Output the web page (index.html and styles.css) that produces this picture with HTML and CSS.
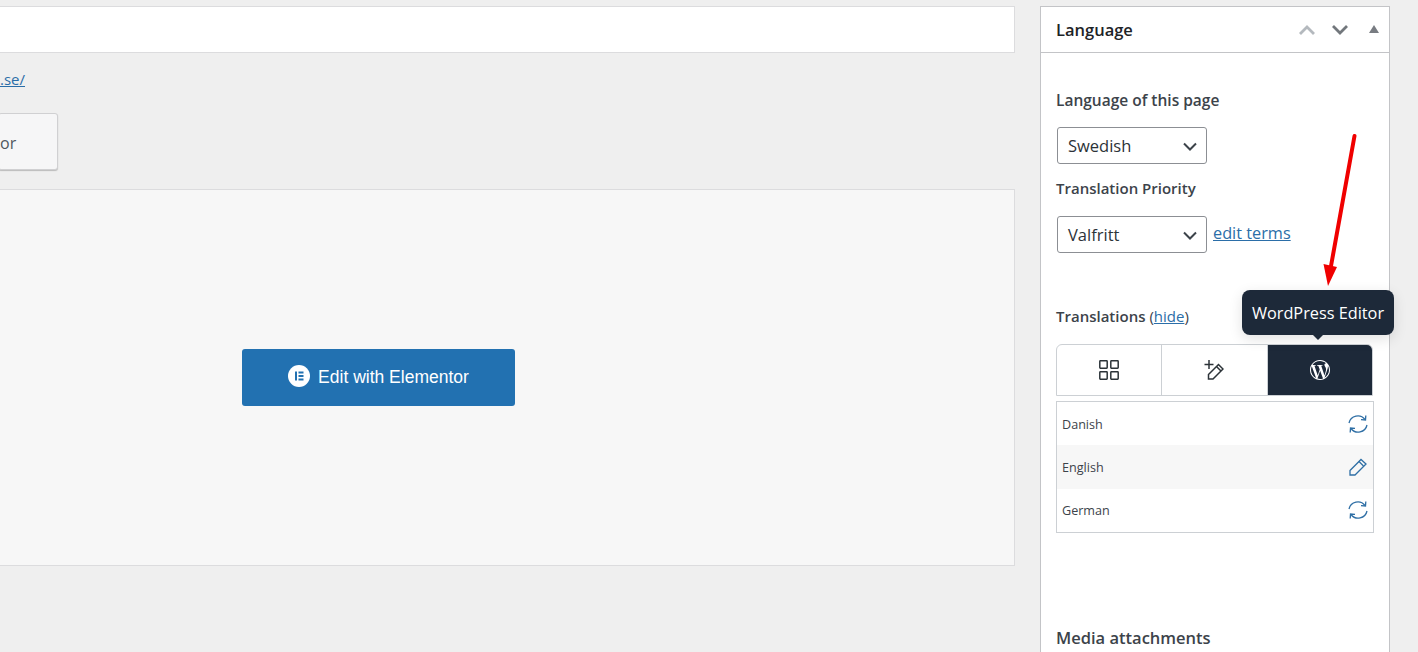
FILE: index.html
```html
<!DOCTYPE html>
<html lang="en">
<head>
    <meta charset="UTF-8">
    <meta name="viewport" content="width=device-width, initial-scale=1.0">
    <title>Edit Page</title>
    <link rel="stylesheet" href="styles.css">
</head>
<body>
    <div class="page">
        <!-- Main column -->
        <div class="main">
            <div class="title-input"></div>
            <div class="permalink"><a href="#">.se/</a></div>
            <div class="switch-btn">or</div>
            <div class="builder-box">
                <a class="elementor-btn" href="#">
                    <svg class="elementor-icon" viewBox="0 0 22 22">
                        <circle cx="11" cy="11" r="11" fill="#fff"/>
                        <rect x="7" y="6.5" width="2" height="9" fill="#2271b1"/>
                        <rect x="10.5" y="6.5" width="5" height="2" fill="#2271b1"/>
                        <rect x="10.5" y="10" width="5" height="2" fill="#2271b1"/>
                        <rect x="10.5" y="13.5" width="5" height="2" fill="#2271b1"/>
                    </svg>
                    Edit with Elementor
                </a>
            </div>
        </div>

        <!-- Language box -->
        <div class="side">
            <div class="box">
                <div class="box-head">
                    <h2>Language</h2>
                    <div class="box-controls">
                        <svg class="chev" viewBox="0 0 18 12"><path d="M2 10l7-7 7 7" stroke="#b4b9be"/></svg>
                        <svg class="chev" viewBox="0 0 18 12"><path d="M2 2l7 7 7-7" stroke="#72777c"/></svg>
                        <svg class="toggle" viewBox="0 0 10 8"><path d="M5 0l5 8H0z"/></svg>
                    </div>
                </div>
                <div class="box-body">
                    <div class="label first">Language of this page</div>
                    <div class="select">
                        Swedish
                        <svg class="select-arrow" viewBox="0 0 14 9"><path d="M1 1.5l6 6 6-6"/></svg>
                    </div>
                    <div class="label priority">Translation Priority</div>
                    <div class="priority-row">
                        <div class="select">
                            Valfritt
                            <svg class="select-arrow" viewBox="0 0 14 9"><path d="M1 1.5l6 6 6-6"/></svg>
                        </div>
                        <a class="edit-terms" href="#">edit terms</a>
                    </div>
                    <div class="label translations">Translations <span class="hide-wrap">(<a href="#">hide</a>)</span></div>
                    <div class="tabs">
                        <div class="tab">
                            <svg class="tab-icon" viewBox="0 0 20 20">
                                <rect x="0.8" y="0.8" width="7.4" height="7.4" rx="0.6"/>
                                <rect x="11.8" y="0.8" width="7.4" height="7.4" rx="0.6"/>
                                <rect x="0.8" y="11.8" width="7.4" height="7.4" rx="0.6"/>
                                <rect x="11.8" y="11.8" width="7.4" height="7.4" rx="0.6"/>
                            </svg>
                        </div>
                        <div class="tab">
                            <svg class="tab-icon" viewBox="0 0 20 20">
                                <path d="M0.5 4.5h9M5 0v9"/>
                                <path d="M4.5 14.5l10-10 4.500 4.500L9 19H4.500z"/>
                                <path d="M12.500 6.500l4.500 4.500"/>
                            </svg>
                        </div>
                        <div class="tab active">
                            <svg class="wp-icon" viewBox="0 0 24 24"><path d="M21.469 6.825c.84 1.537 1.318 3.3 1.318 5.175 0 3.979-2.156 7.456-5.363 9.325l3.295-9.527c.615-1.54.82-2.771.82-3.864 0-.405-.026-.78-.07-1.11m-7.981.105c.647-.03 1.232-.105 1.232-.105.582-.075.514-.93-.067-.899 0 0-1.755.135-2.88.135-1.064 0-2.85-.15-2.85-.15-.585-.03-.661.855-.075.885 0 0 .54.061 1.125.09l1.68 4.605-2.37 7.08L5.354 6.9c.649-.03 1.234-.1 1.234-.1.585-.075.516-.93-.065-.896 0 0-1.746.138-2.874.138-.2 0-.438-.008-.69-.015C4.911 3.15 8.235 1.215 12 1.215c2.809 0 5.365 1.072 7.286 2.833-.046-.003-.091-.009-.141-.009-1.06 0-1.812.923-1.812 1.914 0 .89.513 1.643 1.06 2.531.411.72.89 1.643.89 2.977 0 .915-.354 1.994-.821 3.479l-1.075 3.585-3.9-11.61.001.014zM12 22.784c-1.059 0-2.081-.153-3.048-.437l3.237-9.406 3.315 9.087c.024.053.05.101.078.149-1.12.393-2.325.609-3.582.609M1.211 12c0-1.564.336-3.05.935-4.39L7.29 21.709C3.694 19.96 1.212 16.271 1.211 12M12 0C5.385 0 0 5.385 0 12s5.385 12 12 12 12-5.385 12-12S18.615 0 12 0"/></svg>
                        </div>
                    </div>
                    <div class="lang-list">
                        <div class="lang-row">
                            <span>Danish</span>
                            <svg class="row-icon" viewBox="0 0 20 20">
                                <path d="M1 9A9 9 0 0 1 17 5.500"/><path d="M17.800 1.500L17.500 6l-4.500-.3"/>
                                <path d="M19 11A9 9 0 0 1 3 14.500"/><path d="M2.200 18.500L2.500 14l4.500.3"/>
                            </svg>
                        </div>
                        <div class="lang-row alt">
                            <span>English</span>
                            <svg class="row-icon" viewBox="0 0 20 20">
                                <path d="M2 13.500L13 2.500l5 4.500L7 18H2z"/>
                                <path d="M11 4.500l4.500 4.500"/>
                            </svg>
                        </div>
                        <div class="lang-row">
                            <span>German</span>
                            <svg class="row-icon" viewBox="0 0 20 20">
                                <path d="M1 9A9 9 0 0 1 17 5.500"/><path d="M17.800 1.500L17.500 6l-4.500-.3"/>
                                <path d="M19 11A9 9 0 0 1 3 14.500"/><path d="M2.200 18.500L2.500 14l4.500.3"/>
                            </svg>
                        </div>
                    </div>
                    <div class="media-title">Media attachments</div>
                </div>
            </div>

            <!-- Tooltip over the tabs -->
            <div class="tooltip">WordPress Editor</div>

            <!-- Red annotation arrow -->
            <svg class="annotation" viewBox="0 0 60 160">
                <path d="M33.500 2L10 132" stroke="#f00000" stroke-width="4" stroke-linecap="round" fill="none"/>
                <path d="M2.500 130L16 133L7 152z" fill="#f00000"/>
            </svg>
        </div>
    </div>
</body>
</html>
```

FILE: styles.css
```css
body {
    margin: 0;
    background-color: #efefef;
    font-family: "Open Sans", "Noto Sans", Arial, sans-serif;
    color: #3c434a;
    overflow: hidden;
}
a {
    color: #2b6ea8;
}
.page {
    display: flex;
    gap: 25px;
    height: 652px;
    padding-top: 6px;
    box-sizing: border-box;
    overflow: hidden;
}

/* Main column */
.main {
    width: 1015px;
    flex-shrink: 0;
}
.title-input {
    height: 45px;
    margin-left: -2px;
    background-color: #fff;
    border: 1px solid #dcdcde;
}
.permalink {
    margin-top: 15px;
    height: 22px;
    font-size: 15px;
    line-height: 22px;
}
.switch-btn {
    display: flex;
    align-items: center;
    width: 57px;
    height: 52px;
    margin-top: 23px;
    margin-left: -2px;
    padding: 3px 0 0 1px;
    background-color: #f6f6f7;
    border: 1px solid #d0d0d2;
    border-radius: 3px;
    box-shadow: 0 1px 1px #bbb;
    font-size: 16px;
    color: #50575e;
}
.builder-box {
    display: flex;
    align-items: center;
    justify-content: center;
    height: 375px;
    margin-top: 19px;
    margin-left: -2px;
    padding-right: 256px;
    background-color: #f7f7f7;
    border: 1px solid #dcdcde;
}
.elementor-btn {
    display: flex;
    align-items: center;
    justify-content: center;
    gap: 8px;
    width: 273px;
    height: 57px;
    background-color: #2271b1;
    border-radius: 3px;
    color: #fff;
    font-family: "Liberation Sans", Arial, sans-serif;
    font-size: 17.500px;
    text-decoration: none;
}
.elementor-icon {
    width: 22px;
    height: 22px;
    margin-top: -3px;
}

/* Side column */
.side {
    position: relative;
    width: 350px;
    flex-shrink: 0;
}
.box {
    background-color: #fff;
    border: 1px solid #c3c4c7;
    height: 700px;
}
.box-head {
    display: flex;
    align-items: center;
    justify-content: space-between;
    height: 45px;
    padding: 0 4px 0 15px;
    border-bottom: 1px solid #c3c4c7;
}
.box-head h2 {
    margin: 0;
    font-size: 16.500px;
    font-weight: 600;
    color: #1d2327;
}
.box-controls {
    display: flex;
    align-items: center;
    gap: 15px;
    padding-right: 6px;
}
.chev {
    width: 18px;
    height: 12px;
}
.chev path {
    fill: none;
    stroke-width: 2.800;
}
.toggle {
    width: 10px;
    height: 8px;
    margin-left: 5px;
    margin-bottom: 2px;
    fill: #787c82;
}
.box-body {
    padding: 0 15px;
}
.label {
    font-size: 15px;
    font-weight: 600;
    line-height: 20px;
    color: #3c434a;
}
.label.first {
    padding-top: 37px;
    font-size: 15.500px;
}
.label.priority {
    margin-top: 14px;
}
.label.translations {
    margin-top: 53px;
}
.hide-wrap {
    font-weight: 400;
}
.select {
    position: relative;
    width: 150px;
    height: 37px;
    margin-top: 17px;
    margin-left: 1px;
    padding-left: 10px;
    box-sizing: border-box;
    border: 1px solid #8c8f94;
    border-radius: 3px;
    font-size: 16.500px;
    line-height: 36px;
    color: #2c3338;
}
.select-arrow {
    position: absolute;
    right: 9px;
    top: 14px;
    width: 14px;
    height: 9px;
    fill: none;
    stroke: #3c434a;
    stroke-width: 2;
}
.priority-row {
    display: flex;
    align-items: flex-start;
    gap: 6px;
}
.priority-row .select {
    margin-top: 18px;
}
.edit-terms {
    margin-top: 23px;
    font-size: 16.300px;
    line-height: 24px;
}
.tabs {
    display: flex;
    height: 50px;
    width: 315px;
    margin-top: 18px;
    border: 1px solid #ccd0d4;
    border-radius: 6px 6px 0 0;
    overflow: hidden;
}
.tab {
    display: flex;
    align-items: center;
    justify-content: center;
    flex: 1;
    border-right: 1px solid #ccd0d4;
}
.tab:last-child {
    border-right: none;
}
.tab.active {
    background-color: #1d2939;
}
.tab-icon {
    width: 20px;
    height: 20px;
    fill: none;
    stroke: #2c3338;
    stroke-width: 1.500;
}
.wp-icon {
    width: 20px;
    height: 20px;
    fill: #fff;
}
.lang-list {
    width: 316px;
    margin-top: 5px;
    border: 1px solid #ccd0d4;
}
.lang-row {
    display: flex;
    align-items: center;
    justify-content: space-between;
    height: 43.300px;
    padding: 0 5px;
    font-size: 12.600px;
    color: #3c434a;
}
.lang-row span {
    padding-top: 1px;
}
.lang-row.alt {
    background-color: #f7f7f7;
}
.row-icon {
    width: 20px;
    height: 20px;
    fill: none;
    stroke: #2f6fa5;
    stroke-width: 1.300;
}
.media-title {
    margin-top: 93px;
    font-size: 16.500px;
    font-weight: 600;
    line-height: 24px;
    color: #3c434a;
}

/* Overlays */
.tooltip {
    position: absolute;
    left: 202px;
    top: 284px;
    width: 152px;
    height: 45px;
    background-color: #1d2939;
    border-radius: 8px;
    box-shadow: 0 4px 14px rgba(0, 0, 0, 0.12);
    color: #fff;
    font-size: 16.300px;
    line-height: 47px;
    text-align: center;
    white-space: nowrap;
}
.tooltip::after {
    content: "";
    position: absolute;
    left: 71px;
    bottom: -5px;
    border-left: 5px solid transparent;
    border-right: 5px solid transparent;
    border-top: 5px solid #1d2939;
}
.annotation {
    position: absolute;
    left: 281px;
    top: 128px;
    width: 60px;
    height: 160px;
}
```
